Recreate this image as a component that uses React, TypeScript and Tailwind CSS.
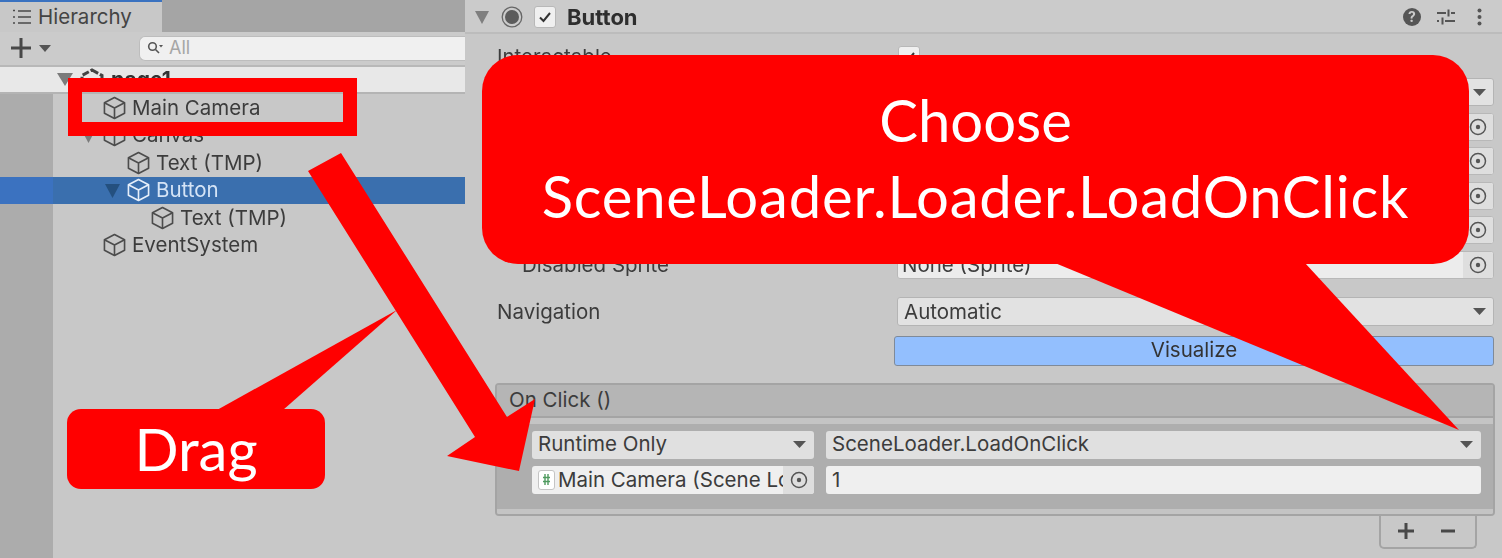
import React from "react";

const FONT = "font-['Inter','Liberation_Sans',sans-serif]";

function Cube({ color = "#4c4c4c" }: { color?: string }) {
  return (
    <svg width="23" height="26" viewBox="0 0 24 26" fill="none" stroke={color} strokeWidth="1.7" strokeLinejoin="round" className="shrink-0">
      <path d="M12 2 L22.5 7.5 V18.5 L12 24 L1.5 18.5 V7.5 Z" />
      <path d="M1.5 7.5 L12 13 L22.5 7.5 M12 13 V24" />
    </svg>
  );
}

function Tri({ w = 14, h = 8, color = "#555" }: { w?: number; h?: number; color?: string }) {
  return (
    <svg width={w} height={h} viewBox={`0 0 ${w} ${h}`} className="shrink-0">
      <path d={`M0 0 H${w} L${w / 2} ${h} Z`} fill={color} />
    </svg>
  );
}

function Target() {
  return (
    <svg width="18" height="18" viewBox="0 0 18 18" fill="none" className="shrink-0">
      <circle cx="9" cy="9" r="7.5" stroke="#555" strokeWidth="1.5" />
      <circle cx="9" cy="9" r="2.2" fill="#555" />
    </svg>
  );
}

function TreeRow({ depth, label, arrow, selected }: { depth: number; label: string; arrow?: boolean; selected?: boolean }) {
  return (
    <div className={`flex h-[27.5px] items-center ${selected ? "bg-[#3a6fae]" : ""}`}>
      <div className={`h-full w-[53px] shrink-0 ${selected ? "bg-[#3b72c0]" : "bg-[#acacac]"}`} />
      <div className="relative flex items-center gap-[6px]" style={{ paddingLeft: 50 + depth * 24 }}>
        {arrow && (
          <div className="absolute top-[7px]" style={{ left: 28 + depth * 24 }}>
            <Tri w={15} h={14} color={selected ? "#24507f" : "#7b7b7b"} />
          </div>
        )}
        <Cube color={selected ? "#e6effa" : "#4c4c4c"} />
        <span className={`text-[20.5px] leading-none ${selected ? "text-[#d5e4f6]" : "text-[#3c3c3c]"}`}>{label}</span>
      </div>
    </div>
  );
}

function FieldRow({ label, value, indent }: { label?: string; value?: string; indent?: boolean }) {
  return (
    <div className="flex h-[28px] items-center">
      <div className={`w-[400px] shrink-0 pt-[1px] text-[20.5px] leading-none text-[#3c3c3c] ${indent ? "pl-[25px]" : ""}`}>{label}</div>
      <div className="flex h-full flex-1 items-center justify-between overflow-hidden rounded-[3px] border border-[#b8b8b8] bg-[#ececec]">
        <span className="pl-[4px] pt-[1px] text-[20.5px] leading-none text-[#3c3c3c]">{value}</span>
        <span className="flex h-full w-[30px] items-center justify-center bg-[#dedede]"><Target /></span>
      </div>
    </div>
  );
}

function DropRow({ label, value, tall }: { label?: string; value?: string; tall?: boolean }) {
  return (
    <div className={`flex items-center ${tall ? "h-[29px]" : "h-[28px]"}`}>
      <div className="w-[400px] shrink-0 pt-[1px] text-[20.5px] leading-none text-[#3c3c3c]">{label}</div>
      <div className="flex h-full flex-1 items-center justify-between rounded-[3px] border border-[#b4b4b4] bg-[#e2e2e2] pl-[6px] pr-[7px]">
        <span className="pt-[1px] text-[20.5px] leading-none text-[#3c3c3c]">{value}</span>
        <Tri w={13} h={7} />
      </div>
    </div>
  );
}

export default function App() {
  return (
    <div className={`relative h-[558px] w-[1502px] overflow-hidden bg-[#c8c8c8] ${FONT}`}>
      <div className="flex h-full w-full blur-[0.6px]">
        {/* Hierarchy */}
        <div className="flex h-full w-[465px] shrink-0 flex-col">
          <div className="flex h-[32px] bg-[#a5a5a5]">
            <div className="flex w-[162px] items-center gap-[6px] border-t-2 border-[#3a72c0] bg-[#c8c8c8] pl-[12px]">
              <svg width="20" height="16" viewBox="0 0 20 16" fill="none" stroke="#4a4a4a" strokeWidth="1.6">
                <path d="M6 2 H19 M6 8 H19 M6 14 H19 M1 1.5 H3 M1 8 H3 M1 14 H3" />
              </svg>
              <span className="text-[20.5px] leading-none text-[#444]">Hierarchy</span>
            </div>
          </div>
          <div className="flex h-[35px] items-center border-b-2 border-[#b8b8b8] bg-[#cbcbcb] pb-[1px]">
            <svg width="22" height="22" viewBox="0 0 22 22" className="ml-[10px] shrink-0">
              <path d="M11 1 V21 M1 11 H21" stroke="#484848" strokeWidth="3" />
            </svg>
            <div className="ml-[7px]"><Tri w={12} h={7} /></div>
            <div className="ml-[88px] flex h-[25px] flex-1 items-center gap-[6px] rounded-l-[6px] border border-r-0 border-[#bdbdbd] bg-[#f0f0f0] pl-[7px]">
              <svg width="16" height="14" viewBox="0 0 16 14" fill="none" stroke="#555" strokeWidth="1.6">
                <circle cx="5.5" cy="5.5" r="3.8" />
                <path d="M8.5 8.5 L12 12" />
                <path d="M12 4 H16 L14 6.5 Z" fill="#555" stroke="none" />
              </svg>
              <span className="text-[18px] leading-none text-[#a6a6a6]">All</span>
            </div>
          </div>
          <div className="flex h-[27px] shrink-0 items-center border-b-2 border-[#b4b4b4] bg-[#e8e8e8] pl-[57px]">
            <Tri w={16} h={13} color="#7b7b7b" />
            <svg width="24" height="24" viewBox="0 0 24 24" className="ml-[7px] shrink-0" fill="none" stroke="#444" strokeWidth="3">
              <path d="M12 2 L22 7.5 V17 L12 22.5 L2 17 V7.5 Z" strokeDasharray="7 2" />
            </svg>
            <span className="ml-[7px] text-[21px] font-bold leading-none text-[#333]">page1</span>
          </div>
          <TreeRow depth={0} label="Main Camera" />
          <TreeRow depth={0} label="Canvas" arrow />
          <TreeRow depth={1} label="Text (TMP)" />
          <TreeRow depth={1} label="Button" arrow selected />
          <TreeRow depth={2} label="Text (TMP)" />
          <TreeRow depth={0} label="EventSystem" />
          <div className="flex-1"><div className="h-full w-[53px] bg-[#acacac]" /></div>
        </div>

        {/* Inspector */}
        <div className="flex h-full flex-1 flex-col">
          <div className="flex h-[34px] shrink-0 items-center border-b-2 border-[#bcbcbc] bg-[#cbcbcb] pl-[10px] pt-[2px]">
            <Tri w={14} h={13} color="#7f7f7f" />
            <svg width="22" height="22" viewBox="0 0 22 22" fill="none" className="ml-[12px] shrink-0">
              <circle cx="11" cy="11" r="9.8" stroke="#666" strokeWidth="1.3" />
              <circle cx="11" cy="11" r="7" fill="#5c5c5c" />
            </svg>
            <span className="ml-[11px] flex h-[22px] w-[22px] items-center justify-center rounded-[3px] border border-[#b8b8b8] bg-[#f0f0f0]">
              <svg width="14" height="12" viewBox="0 0 14 12" fill="none" stroke="#333" strokeWidth="2"><path d="M2 6.5 L5.5 10 L12 2" /></svg>
            </span>
            <span className="ml-[11px] text-[22px] font-bold leading-none text-[#2e2e2e]">Button</span>
            <div className="ml-auto flex items-center pr-[20px]">
              <svg width="18" height="18" viewBox="0 0 18 18">
                <circle cx="9" cy="9" r="9" fill="#555" />
                <text x="9" y="14" textAnchor="middle" fontSize="14" fontWeight="700" fill="#cbcbcb" fontFamily="Inter, sans-serif">?</text>
              </svg>
              <svg width="18" height="16" viewBox="0 0 18 16" fill="none" stroke="#555" strokeWidth="2" className="ml-[16px]">
                <path d="M0 4 H9 M14 4 H18 M11.5 0.5 V7.5 M0 12 H2 M8 12 H18 M5.5 8.5 V15.5" />
              </svg>
              <svg width="5" height="18" viewBox="0 0 5 18" fill="#555" className="ml-[22px]">
                <circle cx="2.5" cy="2.5" r="2" /><circle cx="2.5" cy="9" r="2" /><circle cx="2.5" cy="15.5" r="2" />
              </svg>
            </div>
          </div>

          <div className="flex flex-1 flex-col pl-[32px] pr-[8px]">
            <div className="mt-[12px] flex h-[22px] items-center">
              <div className="w-[401px] shrink-0 text-[20.5px] leading-none text-[#3c3c3c]">Interactable</div>
              <span className="flex h-[22px] w-[22px] items-center justify-center rounded-[3px] border border-[#b8b8b8] bg-[#f0f0f0]">
                <svg width="14" height="12" viewBox="0 0 14 12" fill="none" stroke="#333" strokeWidth="2"><path d="M2 6.5 L5.5 10 L12 2" /></svg>
              </span>
            </div>
            <div className="mt-[10px] flex flex-col gap-[6.5px]">
              <DropRow />
              <FieldRow indent />
              <FieldRow indent />
              <FieldRow indent />
              <FieldRow indent />
              <FieldRow label="Disabled Sprite" value="None (Sprite)" indent />
            </div>
            <div className="mt-[18.5px]"><DropRow tall label="Navigation" value="Automatic" /></div>
            <div className="ml-[397px] mt-[9.5px] flex h-[30px] items-center justify-center rounded-[3px] border border-[#7f8a99] bg-[#93bffe] text-[20.5px] leading-none text-[#333]">
              Visualize
            </div>

            {/* On Click */}
            <div className="-ml-[2px] -mr-[1px] mt-[17px] flex h-[133px] flex-col overflow-hidden rounded-[4px] border-2 border-[#a4a4a4] bg-[#c4c4c4]">
              <div className="flex h-[33px] shrink-0 items-center border-b-2 border-[#a4a4a4] bg-[#b5b5b5] pl-[12px] text-[20.5px] leading-none text-[#3c3c3c]">On Click ()</div>
              <div className="h-[6px] shrink-0 bg-[#c4c4c4]" />
              <div className="flex flex-1 flex-col gap-[7px] bg-[#aeaeae] pl-[35px] pr-[12px] pt-[7px]">
                <div className="flex h-[28px] gap-[12px]">
                  <div className="flex w-[282px] items-center justify-between rounded-[3px] bg-[#e0e0e0] pl-[6px] pr-[8px] text-[20.5px] leading-none text-[#3c3c3c]">
                    <span>Runtime Only</span><Tri w={13} h={7} />
                  </div>
                  <div className="flex flex-1 items-center justify-between rounded-[3px] bg-[#e0e0e0] pl-[6px] pr-[8px] text-[20.5px] leading-none text-[#3c3c3c]">
                    <span>SceneLoader.LoadOnClick</span><Tri w={13} h={7} />
                  </div>
                </div>
                <div className="flex h-[28px] gap-[12px]">
                  <div className="flex w-[282px] items-center overflow-hidden rounded-[3px] bg-[#efefef] pl-[6px] text-[20.5px] leading-none text-[#3c3c3c]">
                    <span className="flex h-[20px] w-[17px] shrink-0 items-center justify-center rounded-[3px] border border-[#c4c4c4] bg-white">
                      <svg width="7" height="11" viewBox="0 0 7 11" fill="none" stroke="#4f9a5f" strokeWidth="1.4">
                        <path d="M2 0 V11 M5 0 V11 M0 3.5 H7 M0 7.5 H7" />
                      </svg>
                    </span>
                    <span className="ml-[3px] w-[225px] shrink-0 overflow-hidden whitespace-nowrap pt-[2px]">Main Camera (Scene Loader)</span>
                    <span className="flex h-full flex-1 items-center justify-center bg-[#dedede]"><Target /></span>
                  </div>
                  <div className="flex flex-1 items-center rounded-[3px] bg-[#efefef] pl-[6px] pt-[2px] text-[20.5px] leading-none text-[#3c3c3c]">1</div>
                </div>
              </div>
              <div className="h-[5px] shrink-0 bg-[#c4c4c4]" />
            </div>
            <div className="ml-[882px] flex h-[33px] w-[98px] items-center justify-center gap-[26px] rounded-b-[5px] border-2 border-t-0 border-[#a4a4a4] pr-[4px]">
              <svg width="18" height="18" viewBox="0 0 18 18"><path d="M9 1 V17 M1 9 H17" stroke="#484848" strokeWidth="3" /></svg>
              <svg width="14" height="18" viewBox="0 0 14 18"><path d="M0 9 H14" stroke="#484848" strokeWidth="3" /></svg>
            </div>
          </div>
        </div>
      </div>

      {/* Annotations lying over the screenshot */}
      <div className="absolute left-[68px] top-[78px] h-[58px] w-[289px] border-[14px] border-[#ff0000]" />
      <svg width="1502" height="558" viewBox="0 0 1502 558" className="absolute left-0 top-0">
        <path d="M308 171 L341 153 L507 417 L535 399 L519 471 L447 456 L475 437 Z" fill="#ff0000" />
        <path d="M217 410 L397 310 L283 410 Z" fill="#ff0000" />
        <path d="M1055 263 L1459 430 L1305 263 Z" fill="#ff0000" />
      </svg>
      <div className="absolute left-[67px] top-[409px] flex h-[80px] w-[258px] items-center justify-center rounded-[14px] bg-[#ff0000] font-['Lato',sans-serif] text-[58px] leading-none text-white">
        Drag
      </div>
      <div className="absolute left-[482px] top-[55px] flex h-[209px] w-[987px] flex-col items-center justify-center gap-[12px] rounded-[36px] bg-[#ff0000] pb-[3px] font-['Lato',sans-serif] text-[58px] leading-[64px] text-white">
        <span>Choose</span>
        <span className="tracking-[0.8px]">SceneLoader.Loader.LoadOnClick</span>
      </div>
    </div>
  );
}
